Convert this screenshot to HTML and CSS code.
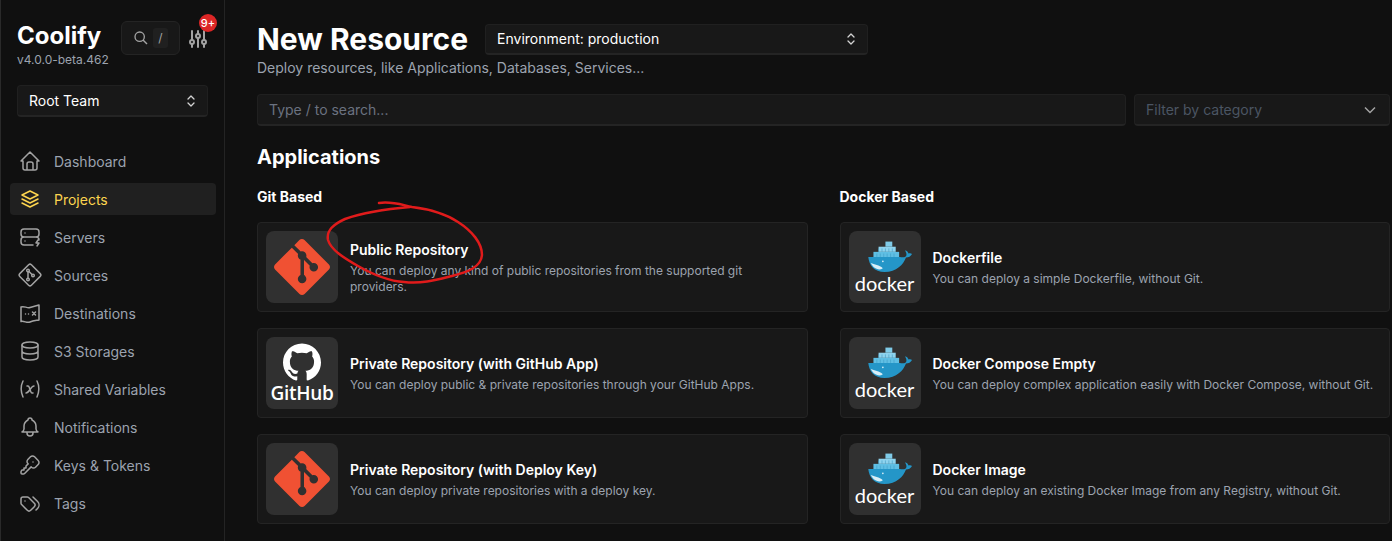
FILE: index.html
```html
<!DOCTYPE html>
<html lang="en">
<head>
    <meta charset="UTF-8">
    <title>New Resource | Coolify</title>
    <link rel="stylesheet" href="styles.css">
</head>
<body>
    <svg class="defs" width="0" height="0">
        <symbol id="git-logo" viewBox="0 0 24 24">
            <path fill="#f05133" d="M23.546 10.93L13.067.452c-.604-.603-1.582-.603-2.188 0L8.708 2.627l2.76 2.76c.645-.215 1.379-.07 1.889.441.516.515.658 1.258.438 1.9l2.658 2.66c.645-.223 1.387-.078 1.9.435.721.72.721 1.884 0 2.604-.719.719-1.881.719-2.6 0-.539-.541-.674-1.337-.404-1.996L12.86 8.955v6.525c.176.086.342.203.488.348.713.721.713 1.883 0 2.6-.719.721-1.889.721-2.609 0-.719-.719-.719-1.879 0-2.598.182-.18.387-.316.605-.406V8.835c-.217-.091-.424-.222-.6-.401-.545-.545-.676-1.342-.396-2.009L7.636 3.7.45 10.881c-.6.605-.6 1.584 0 2.189l10.48 10.477c.604.604 1.582.604 2.186 0l10.43-10.43c.605-.603.605-1.582 0-2.187"/>
        </symbol>
        <symbol id="docker-whale" viewBox="0 0 56 36">
            <path fill="#7fcbe8" d="M25 0h8v6h-8z"/>
            <path fill="#8ed3ee" d="M17 6h20v6H17z"/>
            <path fill="#5fbfe4" d="M11 12h30v6H11z"/>
            <path fill="#2496c8" d="M5 18h37c2 .6 5 .6 7-1 1.500-3-.5-5-1-7 2 .5 3 1.500 4 4 1-.6 3-.6 4 .5-1.500 3-4 4-7 4-3 8-11 17-25 17C12 35.500 6 28 5 18z"/>
            <path fill="#d8eef7" d="M8 25c4 2 10 2 14 6-5 4-12-1-14-6z"/>
            <circle cx="22" cy="23" r="1" fill="#d8eef7"/>
            <path d="M17 8v4M21 8v4M25 8v4M29 8v4M33 8v4M15 14v4M19 14v4M23 14v4M27 14v4M31 14v4M35 14v4" stroke="#3f9cc4" stroke-width=".7"/>
        </symbol>
        <symbol id="chevrons" viewBox="0 0 10 16">
            <path d="M2 6l3-3 3 3M2 10l3 3 3-3" fill="none" stroke="currentColor" stroke-width="1.300" stroke-linecap="round" stroke-linejoin="round"/>
        </symbol>
    </svg>

    <aside class="sidebar">
        <div class="brand-row">
            <div class="brand">
                <a class="logo">Coolify</a>
                <div class="version">v4.0.0-beta.462</div>
            </div>
            <div class="search-btn">
                <svg class="search-icon" viewBox="0 0 24 24"><circle cx="10" cy="10" r="7"/><path d="M21 21l-6-6"/></svg>
                <kbd>/</kbd>
            </div>
            <div class="settings-btn">
                <svg class="nav-icon" viewBox="0 0 24 24"><circle cx="6" cy="15" r="2"/><path d="M6 4v9M6 17v3"/><circle cx="12" cy="9" r="2"/><path d="M12 4v3M12 11v9"/><circle cx="18" cy="15" r="2"/><path d="M18 4v9M18 17v3"/></svg>
                <span class="badge">9+</span>
            </div>
        </div>

        <div class="team-select">
            <span>Root Team</span>
            <svg class="chevrons"><use href="#chevrons"/></svg>
        </div>

        <nav class="menu">
            <a class="menu-item">
                <svg class="nav-icon" viewBox="0 0 24 24"><path d="M5 12H3l9-9 9 9h-2M5 12v7a2 2 0 0 0 2 2h10a2 2 0 0 0 2-2v-7M9 21v-6a2 2 0 0 1 2-2h2a2 2 0 0 1 2 2v6"/></svg>
                Dashboard
            </a>
            <a class="menu-item active">
                <svg class="nav-icon" viewBox="0 0 24 24"><path d="M12 4L4 8l8 4 8-4-8-4M4 12l8 4 8-4M4 16l8 4 8-4"/></svg>
                Projects
            </a>
            <a class="menu-item">
                <svg class="nav-icon" viewBox="0 0 24 24"><path d="M6 4h12a3 3 0 0 1 3 3v2a3 3 0 0 1-3 3H6a3 3 0 0 1-3-3V7a3 3 0 0 1 3-3zM15 20H6a3 3 0 0 1-3-3v-2a3 3 0 0 1 3-3h12a3 3 0 0 1 3 3M7 8v.01M7 16v.01M20 15l-2 3h3l-2 3"/></svg>
                Servers
            </a>
            <a class="menu-item">
                <svg class="nav-icon" viewBox="0 0 24 24"><path d="M10.600 1.800L1.800 10.600a2 2 0 0 0 0 2.800l8.800 8.800a2 2 0 0 0 2.800 0l8.800-8.800a2 2 0 0 0 0-2.800l-8.800-8.800a2 2 0 0 0-2.800 0z"/><circle cx="10" cy="7.500" r="1.300"/><circle cx="10" cy="16.500" r="1.300"/><circle cx="15" cy="12.500" r="1.300"/><path d="M10 9v6M11 8.500l3 3"/></svg>
                Sources
            </a>
            <a class="menu-item">
                <svg class="nav-icon" viewBox="0 0 24 24"><path d="M3 6c3-1.500 6 1.500 9 .5s6-1.500 9-2.500v15c-3 .5-6 .5-9 2s-6-1.500-9-.5zM7.500 13h.01M10.500 13h.01M14.500 11l3 3m0-3l-3 3"/></svg>
                Destinations
            </a>
            <a class="menu-item">
                <svg class="nav-icon" viewBox="0 0 24 24"><ellipse cx="12" cy="6" rx="8" ry="3"/><path d="M4 6v6c0 1.660 3.600 3 8 3s8-1.340 8-3V6M4 12v6c0 1.660 3.600 3 8 3s8-1.340 8-3v-6"/></svg>
                S3 Storages
            </a>
            <a class="menu-item">
                <svg class="nav-icon" viewBox="0 0 24 24"><path d="M5 4C2.500 9 2.500 14 5 20M19 4c2.500 5 2.500 10 0 16M9 9h1c1 0 1 1 2 3.500S13 16 14 16h1M8 16c1.500 0 3-2 4-3.500S14.500 9 16 9"/></svg>
                Shared Variables
            </a>
            <a class="menu-item">
                <svg class="nav-icon" viewBox="0 0 24 24"><path d="M10 5a2 2 0 1 1 4 0 7 7 0 0 1 4 6v3a4 4 0 0 0 2 3H4a4 4 0 0 0 2-3v-3a7 7 0 0 1 4-6M9 17v1a3 3 0 0 0 6 0v-1"/></svg>
                Notifications
            </a>
            <a class="menu-item">
                <svg class="nav-icon" viewBox="0 0 24 24"><path d="M16.555 3.843l3.602 3.602a2.877 2.877 0 0 1 0 4.069l-2.643 2.643a2.877 2.877 0 0 1-4.069 0l-.301-.301-6.558 6.558a2 2 0 0 1-1.239.578L5.172 21H4a1 1 0 0 1-1-1v-1.172a2 2 0 0 1 .586-1.414L4 17h2v-2h2v-2l2.144-2.144-.301-.301a2.877 2.877 0 0 1 0-4.069l2.643-2.643a2.877 2.877 0 0 1 4.069 0zM15 9h.01"/></svg>
                Keys &amp; Tokens
            </a>
            <a class="menu-item">
                <svg class="nav-icon" viewBox="0 0 24 24"><path d="M3 8v4.172a2 2 0 0 0 .586 1.414l5.710 5.710a2.410 2.410 0 0 0 3.408 0l3.592-3.592a2.410 2.410 0 0 0 0-3.408l-5.710-5.710A2 2 0 0 0 9.172 6H5a2 2 0 0 0-2 2zM18 19l1.592-1.592a4.820 4.820 0 0 0 0-6.816L15 6M7 10h-.01"/></svg>
                Tags
            </a>
        </nav>
    </aside>

    <main class="content">
        <div class="title-row">
            <h1>New Resource</h1>
            <div class="env-select">
                <span>Environment: production</span>
                <svg class="chevrons"><use href="#chevrons"/></svg>
            </div>
        </div>
        <p class="subtitle">Deploy resources, like Applications, Databases, Services...</p>

        <div class="filter-row">
            <div class="search-input">Type / to search...</div>
            <div class="category-select">
                <span>Filter by category</span>
                <svg class="chevron-down" viewBox="0 0 12 8"><path d="M1 1.500l5 5 5-5"/></svg>
            </div>
        </div>

        <h2>Applications</h2>

        <div class="columns">
            <section class="column">
                <h3>Git Based</h3>
                <div class="card">
                    <div class="card-logo"><svg class="git-logo"><use href="#git-logo"/></svg></div>
                    <div class="card-text">
                        <div class="card-title">Public Repository</div>
                        <div class="card-desc">You can deploy any kind of public repositories from the supported git providers.</div>
                    </div>
                </div>
                <div class="card">
                    <div class="card-logo github">
                        <svg class="github-mark" viewBox="0 0 24 24"><path fill="#fff" d="M12 .297c-6.630 0-12 5.373-12 12 0 5.303 3.438 9.800 8.205 11.385.600.113.820-.258.820-.577 0-.285-.010-1.040-.015-2.040-3.338.724-4.042-1.610-4.042-1.610C4.422 18.070 3.633 17.700 3.633 17.700c-1.087-.744.084-.729.084-.729 1.205.084 1.838 1.236 1.838 1.236 1.070 1.835 2.809 1.305 3.495.998.108-.776.417-1.305.760-1.605-2.665-.300-5.466-1.332-5.466-5.930 0-1.310.465-2.380 1.235-3.220-.135-.303-.540-1.523.105-3.176 0 0 1.005-.322 3.300 1.230.960-.267 1.980-.399 3-.405 1.020.006 2.040.138 3 .405 2.280-1.552 3.285-1.230 3.285-1.230.645 1.653.240 2.873.120 3.176.765.840 1.230 1.910 1.230 3.220 0 4.610-2.805 5.625-5.475 5.920.420.360.810 1.096.810 2.220 0 1.606-.015 2.896-.015 3.286 0 .315.210.690.825.570C20.565 22.092 24 17.592 24 12.297c0-6.627-5.373-12-12-12"/></svg>
                        <span class="github-word">GitHub</span>
                    </div>
                    <div class="card-text">
                        <div class="card-title">Private Repository (with GitHub App)</div>
                        <div class="card-desc">You can deploy public &amp; private repositories through your GitHub Apps.</div>
                    </div>
                </div>
                <div class="card">
                    <div class="card-logo"><svg class="git-logo"><use href="#git-logo"/></svg></div>
                    <div class="card-text">
                        <div class="card-title">Private Repository (with Deploy Key)</div>
                        <div class="card-desc">You can deploy private repositories with a deploy key.</div>
                    </div>
                </div>
            </section>

            <section class="column">
                <h3>Docker Based</h3>
                <div class="card">
                    <div class="card-logo docker"><svg class="whale"><use href="#docker-whale"/></svg><span class="docker-word">docker</span></div>
                    <div class="card-text">
                        <div class="card-title">Dockerfile</div>
                        <div class="card-desc">You can deploy a simple Dockerfile, without Git.</div>
                    </div>
                </div>
                <div class="card">
                    <div class="card-logo docker"><svg class="whale"><use href="#docker-whale"/></svg><span class="docker-word">docker</span></div>
                    <div class="card-text">
                        <div class="card-title">Docker Compose Empty</div>
                        <div class="card-desc">You can deploy complex application easily with Docker Compose, without Git.</div>
                    </div>
                </div>
                <div class="card">
                    <div class="card-logo docker"><svg class="whale"><use href="#docker-whale"/></svg><span class="docker-word">docker</span></div>
                    <div class="card-text">
                        <div class="card-title">Docker Image</div>
                        <div class="card-desc">You can deploy an existing Docker Image from any Registry, without Git.</div>
                    </div>
                </div>
            </section>
        </div>
    </main>

    <!-- hand drawn annotation on top of the screenshot -->
    <svg class="scribble" viewBox="0 0 1392 541">
        <path d="M379 203C392 201 402 205 412 207C428 209 446 214 458 222C472 231 482 243 482 255C481 267 468 272 452 276C436 280 422 284 404 282C388 281 372 274 358 266C344 258 331 250 328 240C326 230 334 224 345 219C362 213 386 209 410 207"/>
    </svg>
</body>
</html>
```

FILE: styles.css
```css
* {
    box-sizing: border-box;
}
html, body {
    height: 100%;
}
body {
    margin: 0;
    display: flex;
    overflow: hidden;
    background-color: #101010;
    color: #fff;
    font-family: Inter, "Liberation Sans", sans-serif;
    font-size: 14px;
}
.defs {
    position: absolute;
}

/* sidebar */
.sidebar {
    flex: none;
    width: 225px;
    height: 100%;
    padding: 21px 8px 0 9px;
    border-left: 1px solid #2a2a2a;
    border-right: 1px solid #242424;
}
.brand-row {
    display: flex;
    align-items: flex-start;
    padding-left: 7px;
}
.brand {
    width: 104px;
}
.logo {
    display: block;
    font-size: 24px;
    font-weight: 700;
    line-height: 30px;
}
.version {
    margin-top: 1px;
    font-size: 12px;
    line-height: 16px;
    color: #9ca3af;
}
.search-btn {
    display: flex;
    align-items: center;
    justify-content: space-between;
    width: 59px;
    height: 34px;
    padding: 0 11px 0 11px;
    background-color: #181818;
    border: 1px solid #242424;
    border-radius: 6px;
}
.search-icon {
    width: 16px;
    height: 16px;
    fill: none;
    stroke: #a3a3a3;
    stroke-width: 2;
}
kbd {
    width: 15px;
    height: 20px;
    font-family: Inter, sans-serif;
    font-size: 12px;
    line-height: 20px;
    text-align: center;
    color: #a3a3a3;
    background-color: #202020;
    border-radius: 3px;
}
.settings-btn {
    position: relative;
    margin: 6px 0 0 6px;
}
.settings-btn .nav-icon {
    display: block;
    stroke: #a3a3a3;
    stroke-width: 2;
}
.badge {
    position: absolute;
    top: -13px;
    left: 13px;
    width: 18px;
    height: 18px;
    font-size: 11px;
    font-weight: 500;
    line-height: 18px;
    text-align: center;
    background-color: #dc2626;
    border-radius: 50%;
}
.team-select, .env-select {
    display: flex;
    align-items: center;
    justify-content: space-between;
    background-color: #181818;
    border: 1px solid #202020;
    border-bottom: 2px solid #242424;
    border-radius: 4px;
}
.team-select {
    width: 191px;
    height: 32px;
    margin: 17px 0 0 7px;
    padding: 0 11px;
}
.chevrons {
    width: 10px;
    height: 16px;
    color: #d4d4d4;
}
.menu {
    display: flex;
    flex-direction: column;
    gap: 6px;
    margin-top: 28px;
}
.menu-item {
    display: flex;
    align-items: center;
    gap: 12px;
    height: 32px;
    padding-left: 8px;
    color: #9ca3af;
    border-radius: 4px;
}
.menu-item.active {
    color: #fcd44f;
    background-color: #202020;
}
.nav-icon {
    flex: none;
    width: 24px;
    height: 24px;
    fill: none;
    stroke: #a3a3a3;
    stroke-width: 1.500;
    stroke-linecap: round;
    stroke-linejoin: round;
}
.menu-item.active .nav-icon {
    stroke: #fcd44f;
}

/* main column */
.content {
    flex: 1;
    min-width: 0;
    padding: 21px 2px 0 32px;
}
.title-row {
    display: flex;
    align-items: center;
    gap: 17px;
}
h1 {
    margin: 0;
    font-size: 30px;
    font-weight: 700;
    line-height: 36px;
}
.env-select {
    width: 383px;
    height: 31px;
    padding: 0 11px;
}
.subtitle {
    margin: 1px 0 0;
    line-height: 20px;
    color: #9ca3af;
}
.filter-row {
    display: flex;
    gap: 8px;
    margin-top: 16px;
}
.search-input, .category-select {
    height: 32px;
    line-height: 30px;
    color: #6b7280;
    background-color: #181818;
    border: 1px solid #202020;
    border-bottom: 2px solid #242424;
    border-radius: 4px;
}
.search-input {
    flex: 1;
    padding: 0 11px;
}
.category-select {
    display: flex;
    align-items: center;
    justify-content: space-between;
    width: 256px;
    padding: 0 13px 0 11px;
    color: #4b5563;
}
.chevron-down {
    width: 12px;
    height: 8px;
    fill: none;
    stroke: #a3a3a3;
    stroke-width: 1.500;
}
h2 {
    margin: 18px 0 0;
    font-size: 20px;
    font-weight: 700;
    line-height: 26px;
}
.columns {
    display: grid;
    grid-template-columns: 1fr 1fr;
    gap: 32px;
    margin-top: 17px;
}
.column {
    display: flex;
    flex-direction: column;
    gap: 16px;
    min-width: 0;
}
h3 {
    margin: 0 0 -1px;
    font-size: 14px;
    font-weight: 700;
    line-height: 20px;
}

/* cards */
.card {
    display: flex;
    align-items: center;
    gap: 12px;
    height: 90px;
    padding: 8px;
    background-color: #181818;
    border: 1px solid #242424;
    border-radius: 4px;
}
.card-logo {
    display: flex;
    flex: none;
    flex-direction: column;
    align-items: center;
    justify-content: center;
    width: 72px;
    height: 72px;
    background-color: #303030;
    border-radius: 8px;
}
.git-logo {
    width: 56px;
    height: 56px;
}
.github-mark {
    width: 38px;
    height: 38px;
}
.github-word {
    margin-top: 1px;
    font-family: "Open Sans", sans-serif;
    font-size: 19px;
    font-weight: 600;
    line-height: 22px;
    letter-spacing: -.3px;
}
.whale {
    width: 48px;
    height: 32px;
    margin-left: 6px;
}
.docker-word {
    font-family: Lato, sans-serif;
    font-size: 20px;
    line-height: 19px;
    margin-top: 1px;
}
.card-title {
    font-weight: 600;
    line-height: 20px;
}
.card-desc {
    margin-top: 3px;
    font-size: 12px;
    line-height: 16px;
    color: #9ca3af;
}
.scribble {
    position: absolute;
    top: 0;
    left: 0;
    width: 1392px;
    height: 541px;
    fill: none;
    stroke: #e01b1b;
    stroke-width: 2.500;
    stroke-linecap: round;
    pointer-events: none;
}
```
